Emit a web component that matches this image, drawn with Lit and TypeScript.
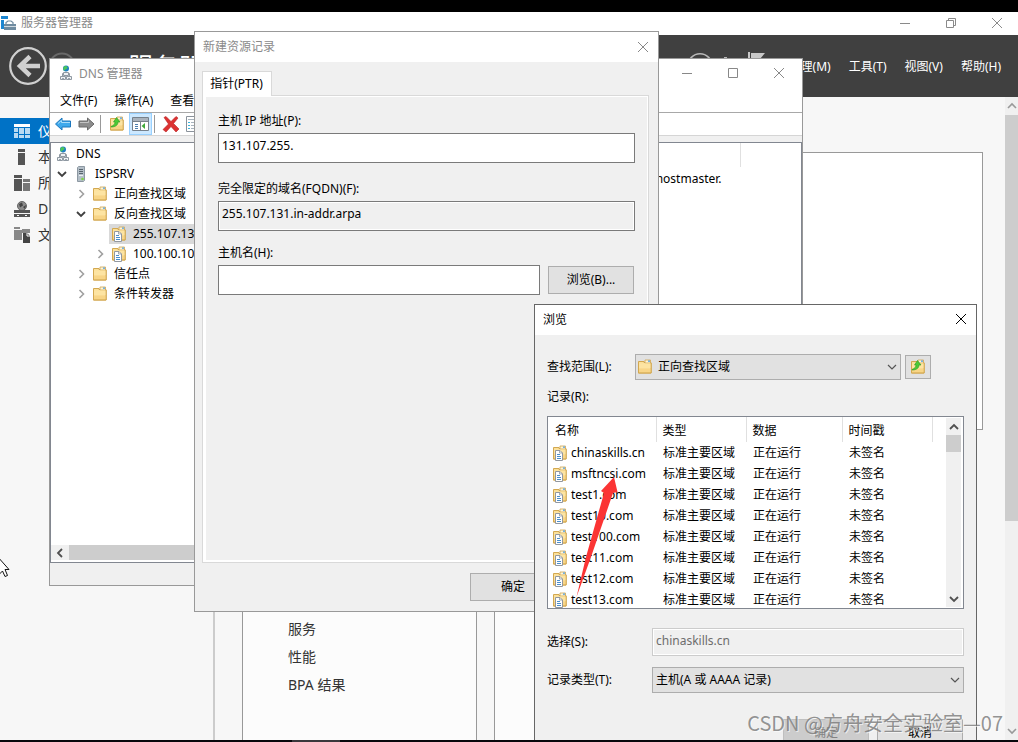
import { LitElement, html, css, svg } from "lit";
import { customElement } from "lit/decorators.js";
import { classMap } from "lit/directives/class-map.js";

const icon = (w: number, h: number, body: unknown) =>
  html`<svg width=${w} height=${h} viewBox="0 0 ${w} ${h}" aria-hidden="true">${body}</svg>`;

const folderShape = svg`
  <path d="M1.500 2.500h5.500v1h7v10.500h-12.500z" fill="#fbe09a" stroke="#d3a850"/>
  <path d="M8 1h5.500v3H8z" fill="#fff6d8" stroke="#cfa550" stroke-width=".8"/>
  <path d="M11 1.500h2v1.300h-2z" fill="#4a9be0"/>
  <path d="M2 4.500h12v5H2z" fill="#fde4a2"/>
  <path d="M2 9.500h12v4H2z" fill="#f8d587"/>
  <path d="M1.500 14h12.700V4" fill="none" stroke="#d3a850"/>`;
const upArrow = svg`<path d="M2 10.500c3-1 4-3 4-4.500H4.500L7.500 1.500l3.500 4.500H9c0 3.500-3 5-7 5z" fill="#4cc936" stroke="#2b9a22" stroke-width=".6"/>`;

const folder = () => icon(16, 16, folderShape);
const folderUp = () => icon(16, 16, svg`${folderShape}${upArrow}`);
const zone = () => icon(16, 16, svg`${folderShape}
  <path d="M3.500 5.500h4.500l2.500 2.500v7.500h-7z" fill="#fff" stroke="#9298a0"/>
  <path d="M7.500 5.500v2.500h3" fill="none" stroke="#9298a0" stroke-width=".8"/>
  <path d="M5 9.500h3M5 11.500h4M5 13.500h4" stroke="#4a8ecb"/>`);
const dnsIcon = () => icon(14, 16, svg`
  <circle cx="7" cy="3.500" r="3" fill="#1d7fc4"/>
  <path d="M5 1.500c2-1.500 4 0 3.500 1.500S6 4 5.500 5.500 3.500 3 5 1.500z" fill="#4cc65a"/>
  <path d="M7 6.500v2M3.500 12V8.500h7V12" fill="none" stroke="#8f99a2"/>
  <path d="M4.500 7.500h5v3h-5z" fill="#eef1f4" stroke="#8f99a2"/>
  <path d="M1.500 11.500h5v3h-5zM7.500 11.500h5v3h-5z" fill="#eef1f4" stroke="#8f99a2"/>
  <path d="M3 13.500h2M9 13.500h2" stroke="#9aa4ad"/>`);
const server = () => icon(16, 16, svg`
  <path d="M4.500 1.500l1-1h6v14l-1 1h-6z" fill="#b4bfc8" stroke="#8d98a2"/>
  <path d="M6 3.500h4M6 5.500h4M6 7.500h4" stroke="#58646e"/>
  <path d="M6 9.500h4" stroke="#e8eef2"/>
  <circle cx="9.500" cy="13" r="1.300" fill="#7ed348"/>`);
const chevron = (d: string, color = "#444", width = 1.6) =>
  icon(12, 12, svg`<path d=${d} fill="none" stroke=${color} stroke-width=${width}/>`);
const DOWN = "M2 4l4 4 4-4";
const UP = "M2 8l4-4 4 4";
const RIGHT = "M4.500 2l4 4-4 4";
const LEFT = "M8 2L4 6l4 4";
const minimize = () => icon(12, 12, svg`<path d="M1 6.500h10" stroke="currentColor"/>`);
const maximize = () => icon(12, 12, svg`<path d="M1.500 1.500h9v9h-9z" fill="none" stroke="currentColor"/>`);
const restore = () => icon(12, 12, svg`<path d="M1.500 3.500h7v7h-7zM3.500 3.500v-2h7v7h-2" fill="none" stroke="currentColor"/>`);
const close = () => icon(12, 12, svg`<path d="M1 1l10 10M11 1L1 11" stroke="currentColor"/>`);

const base = css`
  :host, * { box-sizing: border-box; }
  :host {
    display: block;
    font: 12px/16px "Noto Sans", "Noto Sans CJK SC", sans-serif;
    color: #000;
  }
  svg { display: block; flex: none; }
  button, input, select { font: inherit; color: inherit; margin: 0; border-radius: 0; }
  .plain { border: 0; background: none; padding: 0; }
  .caption { display: flex; align-items: center; background: #fff; }
  .caption h2 { flex: 1; margin: 0; font: inherit; }
  .push {
    border: 1px solid #adadad;
    background: #e1e1e1;
    width: 86px;
    height: 28px;
    padding: 0;
    flex: none;
  }
  .text {
    display: block;
    width: 100%;
    border: 1px solid #7a7a7a;
    background: #fff;
    height: 30px;
    padding: 2px 3px 8px;
  }
`;

@customElement("server-manager")
export class ServerManager extends LitElement {
  static styles = [base, css`
    :host { display: flex; flex-direction: column; height: 100%; background: #f7f7f7; }
    .strip { height: 12px; background: #000; flex: none; }
    .caption { height: 23px; color: #8a8a8a; flex: none; gap: 4px; padding: 0 15px 2px 1px; }
    .controls { display: flex; gap: 34px; }
    .controls .plain { color: #8a8a8a; }
    header { height: 62px; flex: none; display: flex; align-items: center; background: #404040; color: #fff; padding: 0 17px 0 9px; }
    header h1 { flex: 1; margin: 0; padding-left: 51px; font-size: 25px; line-height: 32px; font-weight: 400; white-space: nowrap; overflow: hidden; }
    .status { display: flex; gap: 11px; margin-right: 24px; }
    .flag { margin-left: 9px; }
    nav.menu { display: flex; gap: 18px; padding-top: 2px; }
    a { color: inherit; text-decoration: none; }
    .body { flex: 1; display: flex; min-height: 0; }
    aside { width: 215px; padding-top: 21px; border-right: 2px solid #ccc; flex: none; }
    aside a { display: flex; align-items: center; gap: 7px; height: 26px; padding-left: 14px; font-size: 14px; color: #333; }
    aside a.on { background: #0072c6; color: #fff; }
    main { flex: 1; min-width: 0; display: flex; flex-direction: column; gap: 24px; padding: 55px 22px 0 27px; }
    .card { background: #fff; border: 1px solid #999; height: 278px; flex: none; }
    .roles { display: flex; gap: 17px; flex: 1; }
    .role { width: 235px; background: #fcfcfc; border: 1px solid #999; border-bottom: 0; padding: 164px 0 0 45px; }
    .role ul { list-style: none; margin: 0; padding: 0; display: grid; gap: 8px; }
    .role li { font-size: 14px; line-height: 20px; color: #333; }
    .bar { width: 13px; background: #f0f0f0; display: flex; flex-direction: column; overflow: hidden; }
    .bar .cell { height: 18px; display: grid; place-items: center; }
    .thumb { height: 406px; background: #cdcdcd; }
    .bar .cell:last-child { margin-top: auto; }
    footer { height: 2px; background: #08080c; flex: none; display: flex; padding-left: 292px; }
    footer span { width: 48px; background: #3a383c; }
  `];

  private links = [
    { text: "仪表板", art: svg`<path d="M0 1h16v3H0z" fill="#fff"/><path d="M0 5h4v4H0zM0 10h4v5H0zM5 5h5v6H5zM11 5h5v6h-5zM5 12h5v3H5zM11 12h5v3h-5z" fill="#b9dbf3"/>` },
    { text: "本地服务器", art: svg`<path d="M4 0h7v3H4zM4 4h7v12H4z" fill="#555"/>` },
    { text: "所有服务器", art: svg`<path d="M0 0h8v3H0zM0 4h8v12H0z" fill="#555"/><path d="M9 4h7v3H9zM9 8h7v8H9z" fill="#777"/>` },
    { text: "DNS", art: svg`<circle cx="8" cy="5" r="4.500" fill="#8c8c8c" stroke="#666"/><path d="M5 3l3-1.500 1 3-3 2zM9 6l3-2-1 4z" fill="#444"/><path d="M0 9h16v3.500H0zM0 13h16v3.500H0z" fill="#555"/><path d="M0 12.500h16" stroke="#f7f7f7"/><path d="M3 14.500h2M11 14.500h2" stroke="#f7f7f7"/>` },
    { text: "文件和存储服务", art: svg`<path d="M0 0h6v2H0zM0 3h8v10H0z" fill="#888"/><path d="M8 2h8v4H8z" fill="#888"/><path d="M9 6h4l3 3v7H9z" fill="#444"/><path d="M13 6v3h3" fill="none" stroke="#f7f7f7"/>` },
  ];

  render() {
    return html`
      <div class="strip"></div>
      <div class="caption">
        ${icon(16, 16, svg`<path d="M0 1h7v3H0z" fill="#1c86d1"/><path d="M0 5h3v9H0z" fill="#1c86d1"/><path d="M5 9V7.500l2-1.500h3l2 1.500V9" fill="none" stroke="#6f8ba0" stroke-width="1.200"/><path d="M3 9h12v6H3z" fill="#6f8ba0"/><path d="M3 11.500h12" stroke="#cfd9e0"/>`)}
        <h2>服务器管理器</h2>
        <div class="controls">
          <button class="plain" aria-label="最小化">${minimize()}</button>
          <button class="plain" aria-label="还原">${restore()}</button>
          <button class="plain" aria-label="关闭">${close()}</button>
        </div>
      </div>
      <header>
        <button class="plain" aria-label="后退">${icon(38, 38, svg`<circle cx="19" cy="19" r="17.800" fill="none" stroke="#d0d0d0" stroke-width="2.200"/><path d="M31 19H11M21 9.500L11 19l10 9.500" fill="none" stroke="#d0d0d0" stroke-width="4.500"/>`)}</button>
        ${icon(30, 28, svg`<circle cx="15" cy="14" r="12.500" fill="none" stroke="#6a6a6a" stroke-width="2"/>`)}
        <h1>服务器管理器 · 仪表板</h1>
        <div class="status">
          ${icon(26, 28, svg`<circle cx="13" cy="14" r="12.200" fill="none" stroke="#b8b8b8" stroke-width="1.600"/>`)}
          ${icon(3, 28, svg`<path d="M0 5h3v2H0zM0 9h3v2H0z" fill="#b8b8b8"/>`)}
          <span class="flag">${icon(18, 28, svg`<path d="M1 0h2v28H1zM4 1h14l-5 6 5 6H4z" fill="#c8c8c8"/>`)}</span>
        </div>
        <nav class="menu">
          <a href="#m">管理(M)</a><a href="#t">工具(T)</a><a href="#v">视图(V)</a><a href="#h">帮助(H)</a>
        </nav>
      </header>
      <div class="body">
        <aside>
          ${this.links.map((l, i) => html`<a href="#${i}" class=${classMap({ on: i === 0 })}>${icon(17, 16, l.art)}<span>${l.text}</span></a>`)}
        </aside>
        <main>
          <section class="card"></section>
          <div class="roles">
            <section class="role"><ul><li>服务</li><li>性能</li><li>BPA 结果</li></ul></section>
            <section class="role"></section>
          </div>
        </main>
        <div class="bar">
          <div class="cell">${chevron(UP, "#999")}</div>
          <div class="thumb"></div>
          <div class="cell">${chevron(DOWN, "#999")}</div>
        </div>
      </div>
      <footer><span></span></footer>`;
  }
}

interface Node { level: number; text: string; art: () => unknown; open?: boolean; closed?: boolean; on?: boolean }

@customElement("dns-window")
export class DnsWindow extends LitElement {
  static styles = [base, css`
    :host { display: flex; flex-direction: column; background: #fff; border: 1px solid #999; }
    .caption { height: 28px; color: #8a8a8a; padding: 0 17px 0 9px; gap: 6px; }
    .caption h2 { padding-top: 2px; }
    .controls { display: flex; gap: 34px; }
    .controls .plain { color: #888; }
    .menu { display: flex; gap: 17px; height: 26px; align-items: center; padding: 3px 10px 0; border-bottom: 1px solid #a8a8a8; }
    .tools { display: flex; align-items: center; height: 23px; padding-left: 4px; gap: 5px; border-bottom: 1px solid #d5d5d5; }
    .tools .sep { width: 1px; height: 18px; background: #999; }
    .pair { display: flex; align-items: center; gap: 2px; }
    .tools .on { border: 1px solid #99d1ff; background: #cce8ff; width: 23px; height: 22px; display: grid; place-items: center; padding: 0; }
    .band { background: #f0f0f0; display: flex; flex-direction: column; flex: 1; min-height: 0; }
    .panes { flex: 1; display: flex; min-height: 0; margin-top: 6px; border: 1px solid #828790; }
    .panes > * { background: #fff; }
    .tree { width: 250px; display: flex; flex-direction: column; overflow: hidden; }
    ul { list-style: none; margin: 0; padding: 1px 0 0; flex: 1; }
    li { display: flex; align-items: center; height: 20px; white-space: nowrap; }
    .l0 { padding-left: 3px; }
    .l1 { padding-left: 2px; }
    .l2 { padding-left: 21px; }
    .l3 { padding-left: 40px; }
    .twist { width: 18px; display: grid; place-items: center; flex: none; }
    .label { display: flex; align-items: center; gap: 6px; height: 20px; padding-left: 2px; }
    .label.on { background: #d9d9d9; }
    .scroll { display: flex; height: 17px; padding-bottom: 2px; }
    .scroll .cell { width: 18px; display: grid; place-items: center; background: #f0f0f0; }
    .scroll .thumb { flex: 1; background: #cdcdcd; }
    .list { flex: 1; }
    table { border-collapse: collapse; width: 440px; }
    th { height: 24px; border-right: 1px solid #e0e0e0; font-weight: 400; }
    td { height: 24px; text-align: right; padding: 0 19px 0 0; }
    .foot { height: 22px; flex: none; }
  `];

  private nodes: Node[] = [
    { level: 0, text: "DNS", art: dnsIcon },
    { level: 1, text: "ISPSRV", art: server, open: true },
    { level: 2, text: "正向查找区域", art: folder, closed: true },
    { level: 2, text: "反向查找区域", art: folder, open: true },
    { level: 3, text: "255.107.131.in-addr.arpa", art: zone, on: true },
    { level: 3, text: "100.100.100.in-addr.arpa", art: zone, closed: true },
    { level: 2, text: "信任点", art: folder, closed: true },
    { level: 2, text: "条件转发器", art: folder, closed: true },
  ];

  render() {
    return html`
      <div class="caption">
        ${dnsIcon()}
        <h2>DNS 管理器</h2>
        <div class="controls">
          <button class="plain" aria-label="最小化">${minimize()}</button>
          <button class="plain" aria-label="最大化">${maximize()}</button>
          <button class="plain" aria-label="关闭">${close()}</button>
        </div>
      </div>
      <div class="menu"><span>文件(F)</span><span>操作(A)</span><span>查看(V)</span></div>
      <div class="tools">
        <button class="plain" aria-label="后退">${icon(18, 16, svg`<path d="M1.500 8l6.500-6V5h8.500v6H8v3z" fill="#3fa9ec" stroke="#1b76bd"/><path d="M4 7.500l3.500-3V6.500H16" fill="none" stroke="#a9dcfa"/>`)}</button>
        <button class="plain" aria-label="前进">${icon(18, 16, svg`<path d="M17 8l-6.500-6V5H2v6h8.500v3z" fill="#8d8d8d" stroke="#6a6a6a"/><path d="M3 6.500h8.500v-2" fill="none" stroke="#c4c4c4"/>`)}</button>
        <span class="sep"></span>
        <button class="plain" aria-label="上一级">${icon(18, 16, svg`<g transform="translate(3 0)">${folderShape}${upArrow}</g>`)}</button>
        <span class="pair">
          <button class="on" aria-label="显示控制台树">${icon(17, 14, svg`<path d="M.5.500h16v13H.5z" fill="#fff" stroke="#76818c"/><path d="M1 1h15v3H1z" fill="#aab3bd"/><path d="M1 4.500h15M8.500 5v8" stroke="#76818c"/><path d="M3 7.500h3M3 9.500h3M3 11.500h3" stroke="#4d7fb0"/><path d="M13 6v6L9.500 9z" fill="#3faa3a"/>`)}</button>
          <span class="sep"></span>
        </span>
        <button class="plain" aria-label="删除">${icon(20, 17, svg`<path d="M4 1.500l2-1L11 5.500l5-5 2 1.500-4.500 5.500L19 13l-3 3-5-5.500L6 16l-3-2.500L8.500 8z" fill="#dc3232" stroke="#b92020" stroke-width=".6"/>`)}</button>
        <button class="plain" aria-label="属性">${icon(16, 16, svg`<path d="M1.500.500h13v15h-13z" fill="#fff" stroke="#8a929b"/><path d="M3 3.500h10M6 6.500h7M6 9.500h7M6 12.500h7" stroke="#a9b4be"/><path d="M3 6.500h2M3 9.500h2M3 12.500h2" stroke="#3cb4dc"/>`)}</button>
      </div>
      <div class="band">
        <div class="panes">
          <div class="tree">
            <ul>
              ${this.nodes.map((n) => html`<li class="l${n.level}">
                ${n.level ? html`<span class="twist">${n.open ? chevron(DOWN, "#404040", 1.8) : n.closed ? chevron(RIGHT, "#a0a0a0") : ""}</span>` : ""}
                <span class=${classMap({ label: true, on: !!n.on })}>${n.art()}<span>${n.text}</span></span>
              </li>`)}
            </ul>
            <div class="scroll"><span class="cell">${chevron(LEFT, "#505050", 1.8)}</span><span class="thumb"></span></div>
          </div>
          <div class="list">
            <table><thead><tr><th></th></tr></thead><tbody><tr><td>ispsrv., hostmaster.</td></tr></tbody></table>
          </div>
        </div>
        <div class="foot"></div>
      </div>`;
  }
}

@customElement("record-dialog")
export class RecordDialog extends LitElement {
  static styles = [base, css`
    :host { display: flex; flex-direction: column; background: #f0f0f0; border: 1px solid #999; }
    .caption { height: 30px; color: #8a8a8a; padding: 0 9px 0 8px; flex: none; }
    .caption .plain { color: #888; }
    .tabs { display: flex; padding: 9px 7px 0; }
    .tabs button { border: 1px solid #d9d9d9; border-bottom: 0; background: #fff; height: 25px; width: 70px; padding: 0 1px 0 0; margin-bottom: -1px; z-index: 1; }
    .page { flex: 1; margin: 0 9px 0 7px; border: 1px solid #d9d9d9; background: #fff; padding: 1px 1px 2px 3px; display: flex; }
    form { flex: 1; background: #f0f0f0; padding: 16px 12px; display: flex; flex-direction: column; gap: 14px; }
    .field { display: grid; gap: 4px; }
    .field.wide { margin-bottom: 4px; }
    label { display: block; height: 16px; }
    .line { display: flex; align-items: center; gap: 8px; padding-right: 1px; }
    .readonly { background: #f0f0f0; box-shadow: inset 0 0 0 1px #fff; }
    .buttons { display: flex; justify-content: flex-end; gap: 9px; padding: 10px 7px; }
  `];

  render() {
    return html`
      <div class="caption"><h2>新建资源记录</h2><button class="plain" aria-label="关闭">${close()}</button></div>
      <div class="tabs"><button role="tab" aria-selected="true">指针(PTR)</button></div>
      <div class="page">
        <form>
          <div class="field wide"><label for="ip">主机 IP 地址(P):</label><input id="ip" class="text" value="131.107.255." /></div>
          <div class="field"><label for="fqdn">完全限定的域名(FQDN)(F):</label><input id="fqdn" class="text readonly" readonly value="255.107.131.in-addr.arpa" /></div>
          <div class="field"><label for="host">主机名(H):</label>
            <div class="line"><input id="host" class="text" /><button type="button" class="push">浏览(B)...</button></div>
          </div>
        </form>
      </div>
      <div class="buttons"><button class="push">确定</button><button class="push">取消</button></div>`;
  }
}

@customElement("browse-dialog")
export class BrowseDialog extends LitElement {
  static styles = [base, css`
    :host { display: block; background: #f0f0f0; border: 1px solid #666; }
    .caption { height: 30px; padding: 0 9px 0 8px; }
    .caption .plain { padding-bottom: 2px; }
    .content { padding: 19px 12px; display: flex; flex-direction: column; }
    .lookup { display: flex; align-items: center; height: 26px; }
    .lookup label { width: 88px; }
    .combo { display: grid; align-items: center; flex: 1; }
    .combo > * { grid-area: 1 / 1; }
    .combo select { appearance: none; border: 1px solid #adadad; background: #e1e1e1; width: 100%; height: 26px; padding: 0 3px; }
    .combo svg { pointer-events: none; }
    .combo .arrow { justify-self: end; margin-right: 3px; }
    .lookup select { padding-left: 22px; }
    .lookup .art { margin-left: 2px; }
    .up { border: 1px solid #adadad; background: #e1e1e1; width: 26px; height: 24px; padding: 0; margin: 0 33px 0 4px; display: grid; place-items: center; }
    .heading { margin: 9px 0 11px; height: 16px; }
    .grid { display: flex; border: 1px solid #828790; background: #fff; height: 193px; overflow: hidden; padding-right: 2px; }
    .rows { flex: 1; overflow: hidden; }
    table { border-collapse: collapse; table-layout: fixed; width: 384px; }
    th { font-weight: 400; text-align: left; height: 25px; padding: 2px 0 0 6px; border-right: 1px solid #e0e0e0; }
    th:first-child { padding-left: 7px; }
    td { height: 21px; padding: 0 0 0 7px; white-space: nowrap; }
    td:first-child { padding-left: 4px; }
    .name { display: flex; align-items: center; gap: 3px; }
    .c1 { width: 108px; } .c2 { width: 90px; } .c3 { width: 96px; } .c4 { width: 90px; }
    .bar { width: 15px; background: #f0f0f0; margin: 1px 0; display: flex; flex-direction: column; }
    .cell { height: 17px; display: grid; place-items: center; }
    .thumb { height: 17px; background: #cdcdcd; }
    .cell:last-child { margin-top: auto; }
    .pick { display: grid; grid-template-columns: 105px 1fr; align-items: center; row-gap: 11px; margin-top: 19px; }
    .pick .text { height: 28px; padding-bottom: 6px; border-color: #ccc; background: #f0f0f0; box-shadow: inset 0 0 0 1px #fff; color: #6d6d6d; }
    .buttons { display: flex; justify-content: flex-end; gap: 8px; margin-top: 26px; padding-right: 1px; }
    .push:disabled { background: #ccc; border-color: #bfbfbf; color: #838383; }
  `];

  private names = ["chinaskills.cn", "msftncsi.com", "test1.com", "test10.com", "test100.com", "test11.com", "test12.com", "test13.com"];

  render() {
    return html`
      <div class="caption"><h2>浏览</h2><button class="plain" aria-label="关闭">${close()}</button></div>
      <div class="content">
        <div class="lookup">
          <label for="scope">查找范围(L):</label>
          <div class="combo">
            <select id="scope"><option>正向查找区域</option></select>
            <span class="art">${folder()}</span>
            <span class="arrow">${chevron(DOWN, "#555", 1.2)}</span>
          </div>
          <button class="up" aria-label="上一级">${folderUp()}</button>
        </div>
        <div class="heading" id="records">记录(R):</div>
        <div class="grid">
          <div class="rows">
            <table aria-labelledby="records">
              <thead><tr><th class="c1">名称</th><th class="c2">类型</th><th class="c3">数据</th><th class="c4">时间戳</th></tr></thead>
              <tbody>
                ${this.names.map((n) => html`<tr><td><span class="name">${zone()}<span>${n}</span></span></td><td>标准主要区域</td><td>正在运行</td><td>未签名</td></tr>`)}
              </tbody>
            </table>
          </div>
          <div class="bar">
            <div class="cell">${chevron(UP, "#505050", 1.8)}</div>
            <div class="thumb"></div>
            <div class="cell">${chevron(DOWN, "#505050", 1.8)}</div>
          </div>
        </div>
        <div class="pick">
          <label for="chosen">选择(S):</label>
          <input id="chosen" class="text" disabled value="chinaskills.cn" />
          <label for="kind">记录类型(T):</label>
          <div class="combo">
            <select id="kind"><option>主机(A 或 AAAA 记录)</option></select>
            <span class="arrow">${chevron(DOWN, "#555", 1.2)}</span>
          </div>
        </div>
        <div class="buttons"><button class="push" disabled>确定</button><button class="push">取消</button></div>
      </div>`;
  }
}

@customElement("app-root")
export class AppRoot extends LitElement {
  static styles = [base, css`
    :host { display: block; position: relative; height: 100vh; overflow: hidden; }
    .desk { position: absolute; inset: 0 0 2px; overflow: hidden; }
    dns-window, record-dialog, browse-dialog, .pointer, .arrow, .mark { position: absolute; }
    dns-window { left: 49px; top: 58px; width: 754px; height: 528px; }
    record-dialog { left: 194px; top: 31px; width: 465px; height: 581px; }
    browse-dialog { left: 534px; top: 304px; width: 443px; }
    .pointer { left: 0; top: 558px; }
    .arrow { left: 572px; top: 474px; }
    .mark { right: 15px; bottom: 3px; font: 20px/28px "Noto Sans CJK SC", sans-serif; color: rgba(120, 120, 120, .8); text-shadow: 1px 1px 0 rgba(255, 255, 255, .6); white-space: nowrap; }
  `];

  render() {
    return html`
      <server-manager></server-manager>
      <div class="desk">
        <dns-window></dns-window>
        <record-dialog></record-dialog>
        <browse-dialog></browse-dialog>
        <span class="pointer">${icon(11, 20, svg`<path d="M-3 -2L9 11.500H5l2.500 6-2.500 1-2.500-5.500-3 3" fill="#fff" stroke="#111"/>`)}</span>
        <span class="arrow">${icon(48, 124, svg`<path d="M42 3l3.500 15-4.500 1-22 64L4.500 123 14 83l18-64-3-2z" fill="#fb3434"/>`)}</span>
        <div class="mark">CSDN @方舟安全实验室—07</div>
      </div>`;
  }
}
